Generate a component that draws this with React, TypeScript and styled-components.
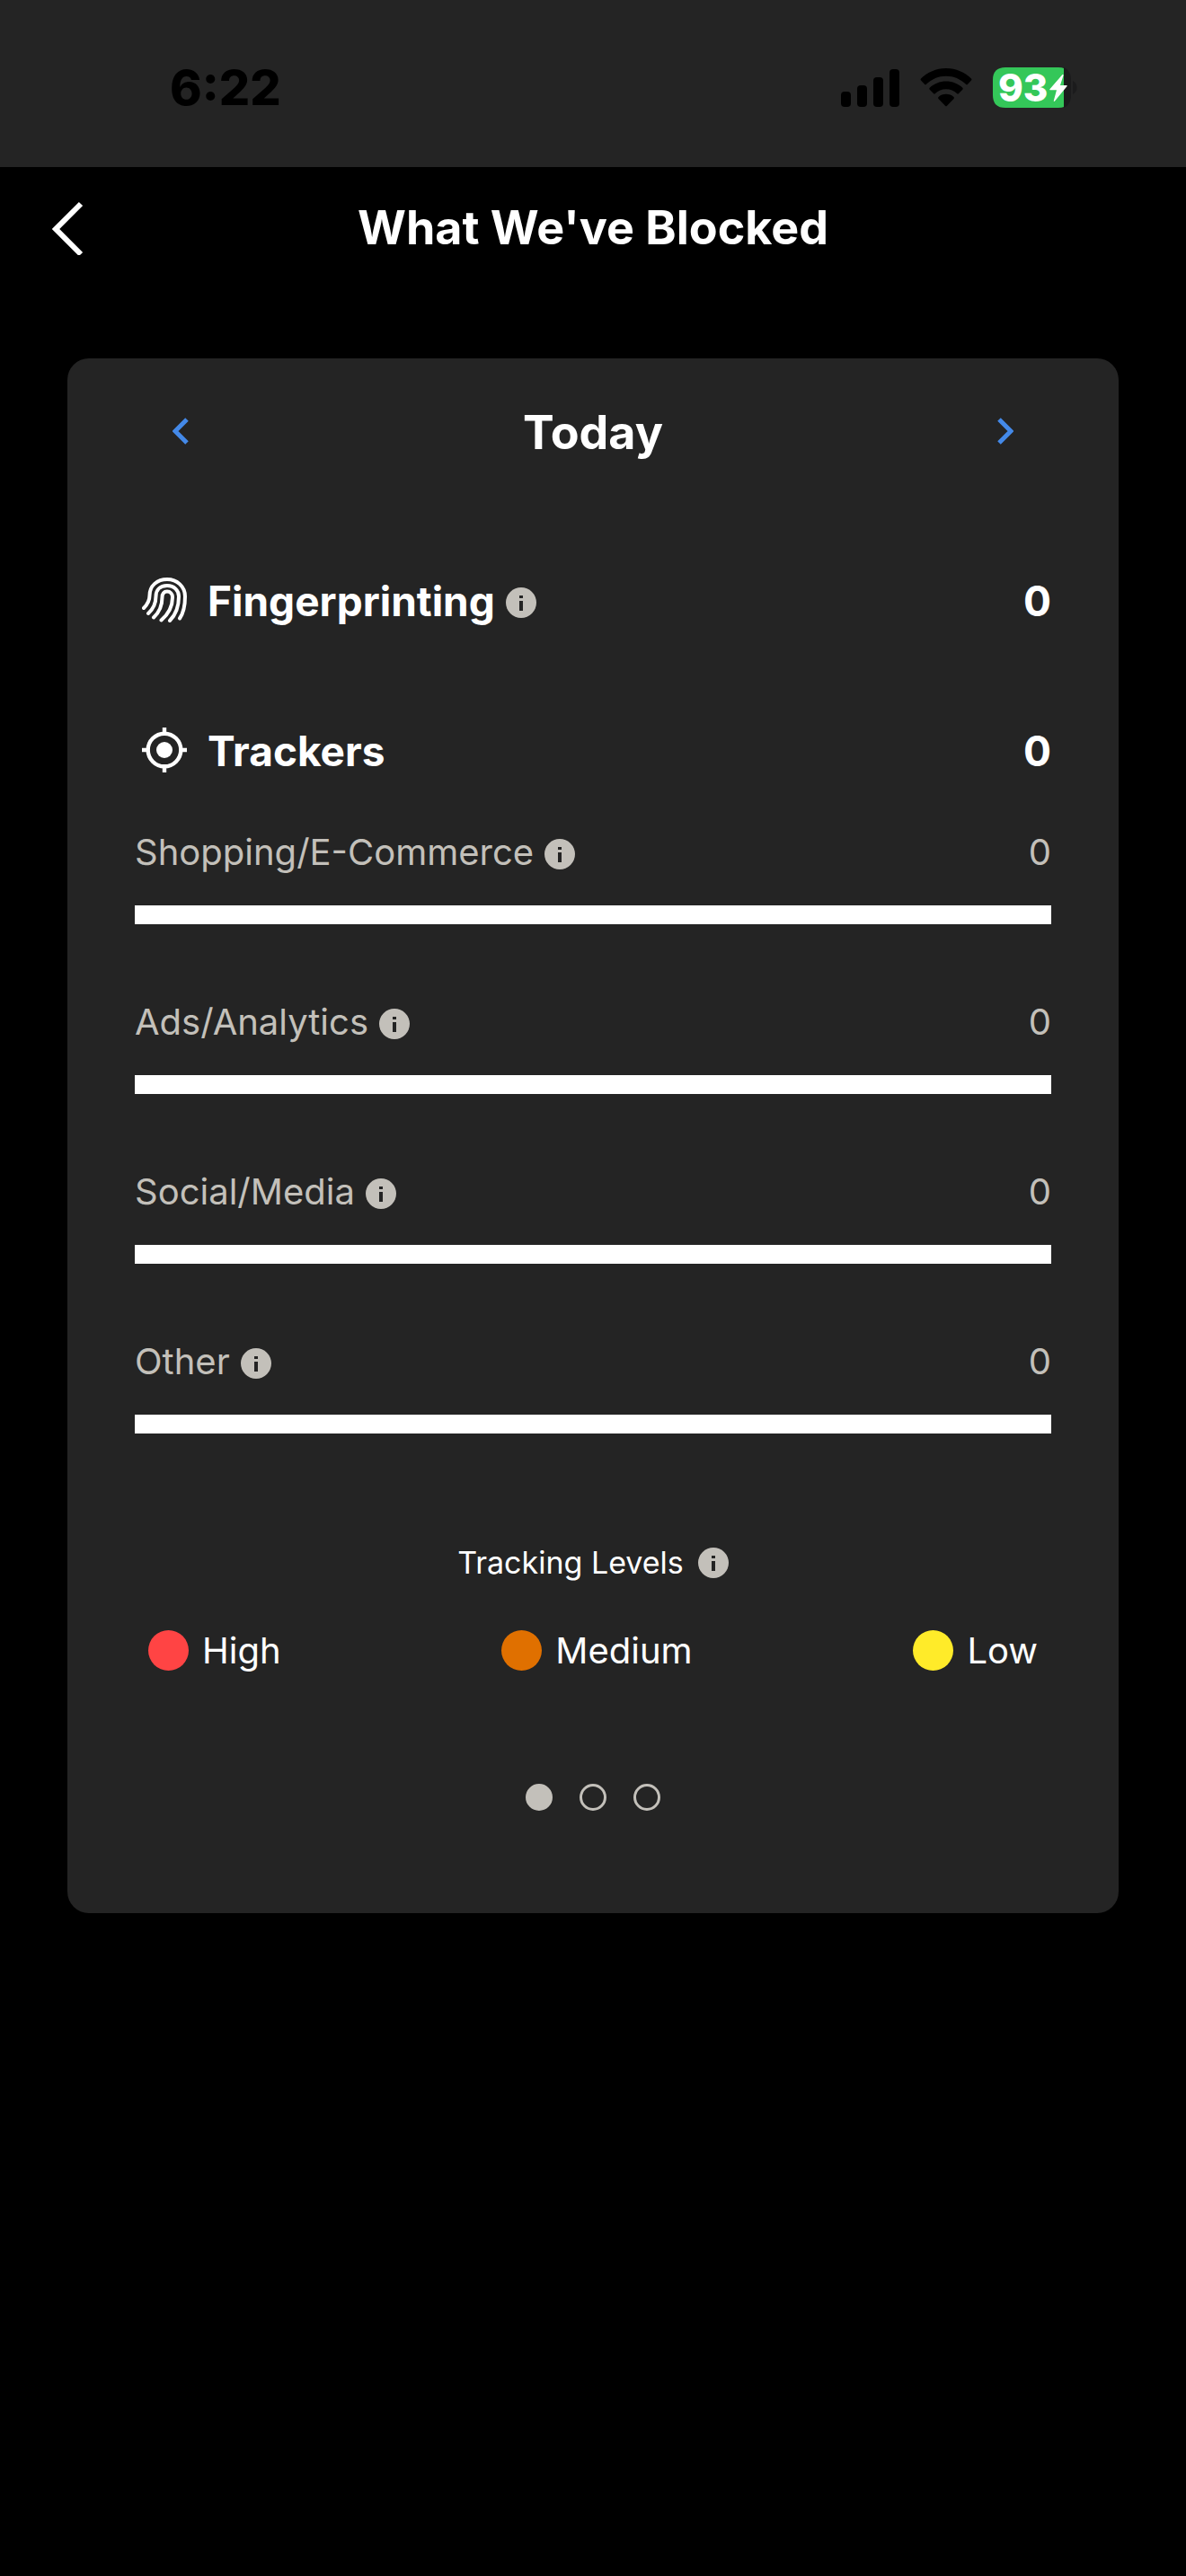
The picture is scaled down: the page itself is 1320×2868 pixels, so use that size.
import React from "react";
import styled, { createGlobalStyle } from "styled-components";

const colors = {
  panel: "#242424",
  muted: "#c3c0ba",
  link: "#4489e8",
  high: "#ff4444",
  medium: "#e07000",
  low: "#ffeb29",
  battery: "#34c759",
};

const GlobalStyle = createGlobalStyle`
  *, *::before, *::after { box-sizing: border-box; }
  html { background: #000; }
  body {
    margin: 0;
    background: #000;
    color: #fff;
    font-family: Inter, "Liberation Sans", sans-serif;
  }
  h1, h2, h3, p, ul, dl, dd, dt { margin: 0; padding: 0; }
  ul { list-style: none; }
  svg { display: block; }
`;

const Screen = styled.div`
  display: flex;
  flex-direction: column;
  min-height: 100vh;
`;

const StatusBar = styled.div`
  display: flex;
  align-items: center;
  justify-content: space-between;
  height: 186px;
  padding: 9px 120px 0 189px;
  background: ${colors.panel};
  color: #000;
`;

const Clock = styled.time`
  font-size: 54px;
  line-height: 60px;
  font-weight: 800;
`;

const StatusIcons = styled.div`
  display: flex;
  align-items: center;
  gap: 23px;
`;

const Battery = styled.div`
  position: relative;
  display: flex;
  width: 95px;
`;

const BatteryLevel = styled.div`
  position: absolute;
  inset: 0 auto 0 6px;
  display: flex;
  align-items: center;
  gap: 2px;
  color: #fff;
  font-size: 42px;
  line-height: 45px;
  font-weight: 800;
`;

const TitleBar = styled.header`
  display: grid;
  grid-template-columns: 120px 1fr 120px;
  align-items: center;
  height: 135px;
  padding: 0 30px;
`;

const Title = styled.h1`
  font-size: 52px;
  line-height: 60px;
  font-weight: 700;
  text-align: center;
`;

const IconButton = styled.button`
  display: flex;
  align-items: center;
  justify-content: center;
  width: 90px;
  height: 90px;
  padding: 0;
  border: 0;
  background: none;
  color: ${(p) => p.color || "#fff"};
  cursor: pointer;
`;

const Card = styled.main`
  margin: 78px 75px;
  padding: 0 75px 114px;
  border-radius: 24px;
  background: ${colors.panel};
`;

const DayPicker = styled.div`
  display: flex;
  align-items: center;
  justify-content: space-between;
  height: 162px;
  margin-bottom: 78px;
  padding: 0 6px;
`;

const Heading = styled.h2`
  padding-top: 3px;
  font-size: 52px;
  line-height: 60px;
  font-weight: 700;
`;

const SummaryRow = styled.div`
  display: flex;
  align-items: center;
  justify-content: space-between;
  height: 60px;
  margin-bottom: 107px;
  padding-left: 8px;
  font-size: 46px;
  font-weight: 700;
`;

const SummaryLabel = styled.h3`
  display: flex;
  align-items: center;
  font-size: inherit;
  font-weight: inherit;
  line-height: 60px;
  & > svg { margin: 0 23px 3px 0; }
`;

const InfoButton = styled.button`
  display: flex;
  margin: 4px 0 0 12px;
  padding: 0;
  border: 0;
  border-radius: 50%;
  background: none;
  color: ${colors.muted};
  cursor: pointer;
`;

const CategoryList = styled.ul`
  display: flex;
  flex-direction: column;
  gap: 83px;
  margin-top: -50px;
  margin-bottom: 121px;
`;

const CategoryHead = styled.div`
  display: flex;
  align-items: center;
  justify-content: space-between;
  height: 51px;
  margin-bottom: 34px;
  color: ${colors.muted};
  font-size: 40px;
  line-height: 51px;
`;

const CategoryLabel = styled.span`
  display: flex;
  align-items: center;
`;

const Track = styled.progress`
  appearance: none;
  display: block;
  width: 100%;
  height: 21px;
  border: 0;
  background: #fff;
  &::-webkit-progress-bar { background: #fff; }
  &::-webkit-progress-value { background: ${colors.high}; }
`;

const LevelsTitle = styled.h3`
  display: flex;
  align-items: center;
  justify-content: center;
  gap: 4px;
  margin-bottom: 53px;
  font-size: 34px;
  line-height: 45px;
  font-weight: 400;
  & > button { margin-top: 0; }
`;

const Legend = styled.ul`
  display: flex;
  justify-content: space-between;
  margin-bottom: 126px;
  padding: 0 15px;
`;

const LegendItem = styled.li`
  display: flex;
  align-items: center;
  gap: 15px;
  font-size: 40px;
  line-height: 45px;
`;

const Swatch = styled.span<{ $color: string }>`
  width: 45px;
  height: 45px;
  border-radius: 50%;
  background: ${(p) => p.$color};
`;

const Pager = styled.nav`
  display: flex;
  justify-content: center;
  gap: 30px;
`;

const PageDot = styled.button<{ $active: boolean }>`
  width: 30px;
  height: 30px;
  padding: 0;
  border: 3px solid ${colors.muted};
  border-radius: 50%;
  background: ${(p) => (p.$active ? colors.muted : "transparent")};
  cursor: pointer;
`;

const SignalIcon = () => (
  <svg width="65" height="42" viewBox="0 0 65 42" fill="currentColor" aria-hidden="true">
    <rect x="0" y="25" width="11" height="17" rx="4" />
    <rect x="18" y="18" width="11" height="24" rx="4" />
    <rect x="36" y="9" width="11" height="33" rx="4" />
    <rect x="54" y="0" width="11" height="42" rx="4" />
  </svg>
);

const WifiIcon = () => (
  <svg width="58" height="43" viewBox="0 0 58 43" fill="currentColor" aria-hidden="true">
    <path d="M29 0C40 0 50 4.500 57 11.500Q58 12.500 57 13.500L53 17.700Q52 18.700 51 17.700C45 12 37.500 8.700 29 8.700S13 12 7 17.700Q6 18.700 5 17.700L1 13.500Q0 12.500 1 11.500C8 4.500 18 0 29 0Z" />
    <path d="M29 14.500C36 14.500 42.500 17.200 47.300 21.700Q48.300 22.700 47.300 23.700L43 28Q42 29 41 28C37.800 25 33.600 23.200 29 23.200S20.200 25 17 28Q16 29 15 28L10.700 23.700Q9.700 22.700 10.700 21.700C15.500 17.200 22 14.500 29 14.500Z" />
    <path d="M29 28.800C32.500 28.800 35.200 30 37.500 31.900Q38.500 32.900 37.500 33.900L30 41.700Q29 42.700 28 41.700L20.500 33.900Q19.500 32.900 20.500 31.900C22.800 30 25.500 28.800 29 28.800Z" />
  </svg>
);

const BatteryShape = () => (
  <svg width="95" height="45" viewBox="0 0 95 45" aria-hidden="true">
    <path d="M79 0C85 3 87 8 87 14V31C87 37 85 42 79 45Z" fill="#1b1b1c" />
    <path d="M14 0H73Q77 0 79 1V44Q77 45 73 45H14Q0 45 0 31V14Q0 0 14 0Z" fill={colors.battery} />
    <path d="M89 15C95 18 95 27 89 30Z" fill="#1b1b1c" />
  </svg>
);

const BoltIcon = () => (
  <svg width="20" height="30" viewBox="0 0 20 30" fill="currentColor" aria-hidden="true">
    <path d="M14.500 0L.4 16.200Q0 17.300 1 17.300H8L4.700 29.500Q5.200 30.300 6 29.500L19.600 13Q20 12 19 12H12L15.600 .8Q15.400 -.4 14.500 0Z" />
  </svg>
);

const BackIcon = () => (
  <svg width="36" height="60" viewBox="0 0 36 60" fill="none" stroke="currentColor" strokeWidth="6" aria-hidden="true">
    <path d="M33 3L5 31L33 59" />
  </svg>
);

const ChevronIcon = ({ right = false }: { right?: boolean }) => (
  <svg width="18" height="30" viewBox="0 0 18 30" fill="none" stroke="currentColor" strokeWidth="5" aria-hidden="true">
    <path d={right ? "M2 2L15 15L2 28" : "M16 2L3 15L16 28"} />
  </svg>
);

const FingerprintIcon = () => (
  <svg width="50" height="50" viewBox="0 0 50 50" fill="none" stroke="#fff" strokeWidth="4" strokeLinecap="round" aria-hidden="true">
    <path d="M2 34C7 29 8.500 25 8.500 20C8.500 9 17 2 28 2S48 10 48 21C48 31 46.500 39 42 45.500" />
    <path d="M7 40C13 34.500 15.500 28 15.500 21C15.500 14 20 9 28 9S41 14.500 41 21C41 32 38 41 31 48" />
    <path d="M13 44.500C20 38 22.500 30 22.500 22C22.500 18 24.500 15.500 28 15.500S34 18 34 22C34 32 29 41 21.500 47.500" />
  </svg>
);

const TargetIcon = () => (
  <svg width="50" height="50" viewBox="0 0 50 50" aria-hidden="true">
    <circle cx="25" cy="25" r="18.300" fill="none" stroke="#fff" strokeWidth="4.400" />
    <circle cx="25" cy="25" r="9" fill="#fff" />
    <path d="M25 0V6M25 44V50M0 25H6M44 25H50" stroke="#fff" strokeWidth="4.400" />
  </svg>
);

const Info = ({ topic }: { topic: string }) => (
  <InfoButton type="button" aria-label={`About ${topic}`}>
    <svg width="34" height="34" viewBox="0 0 34 34" aria-hidden="true">
      <circle cx="17" cy="17" r="17" fill="currentColor" />
      <rect x="15" y="9" width="4" height="3" fill={colors.panel} />
      <rect x="15" y="15" width="4" height="11" fill={colors.panel} />
    </svg>
  </InfoButton>
);

const categories = [
  { name: "Shopping/E-Commerce", count: 0 },
  { name: "Ads/Analytics", count: 0 },
  { name: "Social/Media", count: 0 },
  { name: "Other", count: 0 },
];

const levels = [
  { name: "High", color: colors.high },
  { name: "Medium", color: colors.medium },
  { name: "Low", color: colors.low },
];

export default function App() {
  const [page, setPage] = React.useState(0);

  return (
    <Screen>
      <GlobalStyle />
      <StatusBar>
        <Clock>6:22</Clock>
        <StatusIcons>
          <SignalIcon />
          <WifiIcon />
          <Battery>
            <BatteryShape />
            <BatteryLevel>
              93
              <BoltIcon />
            </BatteryLevel>
          </Battery>
        </StatusIcons>
      </StatusBar>

      <TitleBar>
        <IconButton type="button" aria-label="Back">
          <BackIcon />
        </IconButton>
        <Title>What We've Blocked</Title>
      </TitleBar>

      <Card>
        <DayPicker>
          <IconButton type="button" color={colors.link} aria-label="Previous day">
            <ChevronIcon />
          </IconButton>
          <Heading>Today</Heading>
          <IconButton type="button" color={colors.link} aria-label="Next day">
            <ChevronIcon right />
          </IconButton>
        </DayPicker>

        <SummaryRow>
          <SummaryLabel>
            <FingerprintIcon />
            Fingerprinting
            <Info topic="Fingerprinting" />
          </SummaryLabel>
          <span>0</span>
        </SummaryRow>
        <SummaryRow>
          <SummaryLabel>
            <TargetIcon />
            Trackers
          </SummaryLabel>
          <span>0</span>
        </SummaryRow>

        <CategoryList>
          {categories.map((c) => (
            <li key={c.name}>
              <CategoryHead>
                <CategoryLabel>
                  {c.name}
                  <Info topic={c.name} />
                </CategoryLabel>
                <span>{c.count}</span>
              </CategoryHead>
              <Track value={c.count} max={100} aria-label={c.name} />
            </li>
          ))}
        </CategoryList>

        <LevelsTitle>
          Tracking Levels
          <Info topic="Tracking Levels" />
        </LevelsTitle>
        <Legend>
          {levels.map((l) => (
            <LegendItem key={l.name}>
              <Swatch $color={l.color} />
              {l.name}
            </LegendItem>
          ))}
        </Legend>

        <Pager aria-label="Pages">
          {[0, 1, 2].map((i) => (
            <PageDot
              key={i}
              type="button"
              $active={i === page}
              aria-label={`Page ${i + 1}`}
              onClick={() => setPage(i)}
            />
          ))}
        </Pager>
      </Card>
    </Screen>
  );
}
